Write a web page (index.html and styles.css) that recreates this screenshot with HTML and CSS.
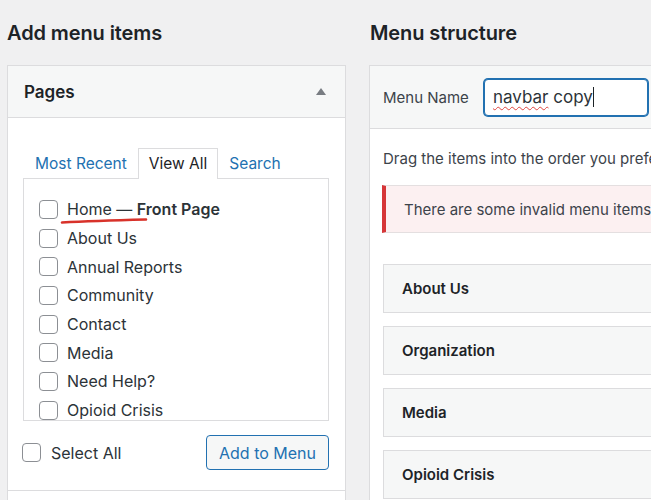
FILE: index.html
```html
<!DOCTYPE html>
<html lang="en">
<head>
    <meta charset="utf-8">
    <title>Menus</title>
    <link rel="stylesheet" href="styles.css">
</head>
<body>
<div class="screen">
    <!-- left: pick pages to add -->
    <div class="col">
        <h2 class="col-title">Add menu items</h2>
        <div class="accordion">
            <div class="section open">
                <div class="section-head">
                    <span>Pages</span>
                    <span class="arrow"></span>
                </div>
                <div class="section-body">
                    <ul class="tabs">
                        <li class="tab">Most Recent</li>
                        <li class="tab active">View All</li>
                        <li class="tab">Search</li>
                    </ul>
                    <div class="tab-panel">
                        <label class="check-row home">
                            <span class="box"></span>
                            <span>Home — <b>Front Page</b></span>
                            <svg class="scribble" width="90" height="8" viewBox="0 0 90 8">
                                <path d="M2 5.5 C 20 4.5, 45 3.5, 86 2.5" stroke="#d8322a" stroke-width="2.6" fill="none" stroke-linecap="round"/>
                            </svg>
                        </label>
                        <label class="check-row"><span class="box"></span><span>About Us</span></label>
                        <label class="check-row"><span class="box"></span><span>Annual Reports</span></label>
                        <label class="check-row"><span class="box"></span><span>Community</span></label>
                        <label class="check-row"><span class="box"></span><span>Contact</span></label>
                        <label class="check-row"><span class="box"></span><span>Media</span></label>
                        <label class="check-row"><span class="box"></span><span>Need Help?</span></label>
                        <label class="check-row"><span class="box"></span><span>Opioid Crisis</span></label>
                    </div>
                    <div class="actions">
                        <label class="check-row select-all"><span class="box"></span><span>Select All</span></label>
                        <button class="btn">Add to Menu</button>
                    </div>
                </div>
            </div>
            <div class="section">
                <div class="section-head closed"></div>
            </div>
        </div>
    </div>

    <!-- right: the menu being edited -->
    <div class="col">
        <h2 class="col-title">Menu structure</h2>
        <div class="menu-box">
            <div class="menu-head">
                <span class="menu-label">Menu Name</span>
                <div class="name-input"><span class="misspelt">navbar</span> copy<span class="caret"></span></div>
            </div>
            <div class="menu-body">
                <p class="hint">Drag the items into the order you prefer. Click the arrow on the right of the item to reveal additional configuration options.</p>
                <div class="notice">There are some invalid menu items. Please check or delete them.</div>
                <div class="menu-item">About Us</div>
                <div class="menu-item">Organization</div>
                <div class="menu-item">Media</div>
                <div class="menu-item">Opioid Crisis</div>
            </div>
        </div>
    </div>
</div>
</body>
</html>
```

FILE: styles.css
```css
html, body {
    margin: 0;
    padding: 0;
    height: 100%;
    overflow: hidden;
}

body {
    background-color: #f0f0f1;
    font-family: Inter, "Noto Sans", sans-serif;
    color: #2c3338;
}

.screen {
    display: grid;
    grid-template-columns: 339px 420px;
    column-gap: 24px;
    padding-left: 7px;
    width: 800px;
}

.col-title {
    margin: 0;
    padding-top: 21px;
    margin-bottom: 20px;
    font-size: 20px;
    line-height: 24px;
    font-weight: 600;
    color: #1d2327;
    letter-spacing: -0.1px;
}

/* accordion on the left */
.accordion {
    border: 1px solid #dcdcde;
    border-bottom: none;
}

.section-head {
    height: 51px;
    display: flex;
    align-items: center;
    justify-content: space-between;
    padding: 0 19px 0 16px;
    background-color: #f6f7f7;
    border-bottom: 1px solid #dcdcde;
    font-size: 17px;
    font-weight: 600;
    color: #1d2327;
}

.section-head.closed {
    background-color: #fff;
    border-bottom: none;
    border-top: 1px solid #dcdcde;
}

.arrow {
    width: 0;
    height: 0;
    border-left: 5px solid transparent;
    border-right: 5px solid transparent;
    border-bottom: 7px solid #787c82;
}

.section-body {
    background-color: #fff;
    padding: 30px 16px 20px 15px;
}

.tabs {
    display: flex;
    list-style: none;
    margin: 0;
    padding: 0 0 0 1px;
    position: relative;
    z-index: 1;
}

.tab {
    height: 29px;
    line-height: 29px;
    padding: 0 10px;
    font-size: 15.5px;
    color: #2271b1;
    border: 1px solid transparent;
    border-bottom: none;
}

.tab.active {
    color: #1d2327;
    background-color: #fff;
    border-color: #dcdcde;
    height: 30px;
}

.tab-panel {
    box-sizing: border-box;
    border: 1px solid #dcdcde;
    height: 243px;
    overflow: hidden;
    padding: 16px 15px 0;
    margin-top: -1px;
}

.check-row {
    display: flex;
    align-items: center;
    gap: 9px;
    height: 28.7px;
    font-size: 16px;
    color: #2c3338;
    position: relative;
}

.check-row b {
    font-weight: 600;
}

.box {
    width: 17px;
    height: 17px;
    border: 1px solid #8c8f94;
    border-radius: 4px;
    background-color: #fff;
    flex: none;
}

.scribble {
    position: absolute;
    left: 21px;
    top: 22px;
}

.actions {
    display: flex;
    justify-content: space-between;
    align-items: center;
    margin-top: 14px;
    margin-left: -1px;
}

.select-all {
    gap: 10px;
}

.btn {
    height: 35px;
    padding: 0 12px;
    border: 1px solid #2271b1;
    border-radius: 4px;
    background-color: #f6f7f7;
    color: #2271b1;
    font-family: inherit;
    font-size: 16px;
}

/* menu editor on the right */
.menu-box {
    border: 1px solid #dcdcde;
    border-right: none;
    background-color: #fff;
    margin-left: -1px;
}

.menu-head {
    height: 62px;
    display: flex;
    align-items: center;
    padding-left: 13px;
    background-color: #f6f7f7;
    border-bottom: 1px solid #dcdcde;
}

.menu-label {
    width: 101px;
    font-size: 15px;
    color: #3c434a;
}

.name-input {
    box-sizing: border-box;
    width: 164px;
    height: 37px;
    display: flex;
    align-items: center;
    padding-left: 8px;
    border: 1px solid #2271b1;
    border-radius: 4px;
    box-shadow: 0 0 0 1px #2271b1;
    background-color: #fff;
    font-size: 17px;
    color: #2c3338;
    white-space: pre;
}

.misspelt {
    text-decoration: underline wavy #e0443e;
    text-decoration-thickness: 1px;
    text-underline-offset: 3px;
}

.caret {
    width: 1px;
    height: 20px;
    background-color: #1d2327;
}

.menu-body {
    padding: 20px 0 0 13px;
}

.hint {
    margin: 0 0 16px;
    font-size: 15px;
    line-height: 20px;
    color: #3c434a;
    white-space: nowrap;
}

.notice {
    box-sizing: border-box;
    height: 48px;
    display: flex;
    align-items: center;
    margin-left: -1px;
    padding-left: 18px;
    border: 1px solid #e4dfe0;
    border-left: 4px solid #d63638;
    background-color: #fcf0f1;
    font-size: 15px;
    color: #3c434a;
    white-space: nowrap;
    margin-bottom: 31px;
}

.menu-item {
    box-sizing: border-box;
    height: 49px;
    display: flex;
    align-items: center;
    padding-left: 18px;
    margin-bottom: 13px;
    border: 1px solid #dcdcde;
    background-color: #f6f7f7;
    font-size: 15px;
    font-weight: 600;
    color: #1d2327;
}
```
